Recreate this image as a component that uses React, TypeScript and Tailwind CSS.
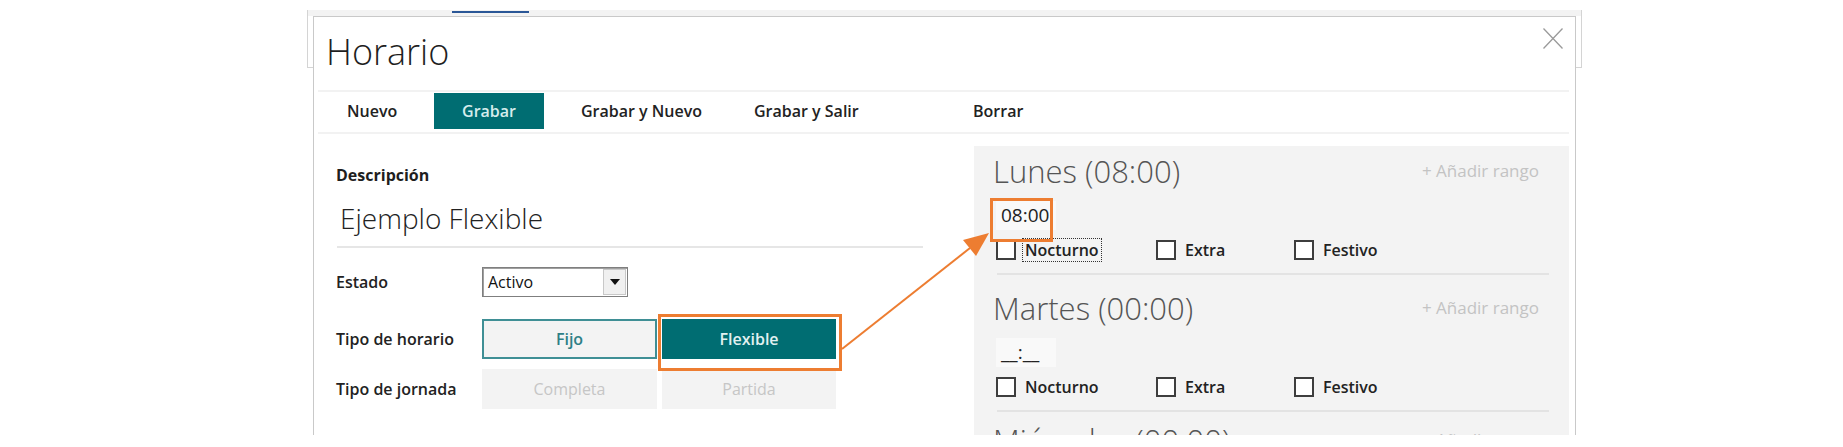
import React from "react";

const checks = ["Nocturno", "Extra", "Festivo"];

function Checkbox({ label, focused, width }: { label: string; focused?: boolean; width: string }) {
  return (
    <div className={`flex items-center ${width}`}>
      <span className="h-[20px] w-[20px] shrink-0 border-2 border-[#3e3e3e] bg-white" />
      <span
        className={`ml-[6px] border px-[2px] text-[16px] font-semibold leading-[22px] text-[#222] ${
          focused ? "border-dotted border-[#333]" : "border-transparent"
        }`}
      >
        {label}
      </span>
    </div>
  );
}

function Day({
  name,
  hours,
  value,
  focused,
  last,
}: {
  name: string;
  hours: string;
  value: string;
  focused?: boolean;
  last?: boolean;
}) {
  return (
    <div className={`pb-[13px] ${last ? "-mt-[5px]" : ""}`}>
      <div className="flex items-start justify-between">
        <div className="-ml-[3px] text-[31px] font-light leading-[40px] text-[#555]">
          {name} ({hours})
        </div>
        <div className="mt-[8px] pr-[10px] text-[17px] leading-[24px] text-[#c3c3c3]">+ Añadir rango</div>
      </div>
      <div className="mt-[10px] h-[29px] w-[60px] bg-[#f9f9f9] pl-[5px] text-[19px] leading-[29px] text-[#222]">
        {value}
      </div>
      <div className="mt-[10px] flex h-[20px] items-center">
        <Checkbox label={checks[0]} focused={focused} width="w-[160px]" />
        <Checkbox label={checks[1]} width="w-[138px]" />
        <Checkbox label={checks[2]} width="w-[138px]" />
      </div>
      <div className="ml-[1px] mt-[13px] h-[2px] bg-[#e3e3e3]" />
    </div>
  );
}

function Field({ label, children }: { label: string; children: React.ReactNode }) {
  return (
    <div className="flex items-center">
      <div className="w-[146px] text-[16px] font-semibold text-[#222]">{label}</div>
      {children}
    </div>
  );
}

export default function App() {
  return (
    <div className="relative h-[447px] w-[1843px] overflow-hidden bg-white font-['Open_Sans',sans-serif]">
      {/* ventana de fondo */}
      <div className="pl-[307px] pt-[10px]">
        <div className="h-[58px] w-[1275px] border-x border-b border-[#d4d4d4] bg-white">
          <div className="h-[6px] bg-[#f3f3f3] pt-[1px]">
            <div className="ml-[144px] h-[2px] w-[77px] bg-[#2b5797]" />
          </div>
        </div>
      </div>

      {/* modal */}
      <div className="absolute left-[313px] top-[16px] h-[419px] w-[1263px] overflow-hidden border border-b-0 border-[#c9c9c9] bg-white">
        <div className="flex h-[73px] items-start justify-between">
          <h1 className="ml-[12px] mt-[15px] text-[36px] font-light leading-[40px] text-[#1e1e1e]">Horario</h1>
          <svg className="mr-[12px] mt-[11px]" width="20" height="21" viewBox="0 0 20 21">
            <path d="M0.5 0.5L19.5 20.5M19.5 0.5L0.5 20.5" stroke="#9a9a9a" strokeWidth="1.3" fill="none" />
          </svg>
        </div>

        {/* barra de acciones */}
        <div className="ml-[4px] mr-[6px] flex h-[44px] items-start border-y-2 border-[#f2f2f2] pt-[1px] text-[16px] font-semibold text-[#222]">
          <div className="w-[116px] pl-[29px] leading-[36px]">Nuevo</div>
          <div className="h-[36px] w-[110px] bg-[#006d72] text-center leading-[36px] text-[#d6ecec]">Grabar</div>
          <div className="w-[173px] pl-[37px] leading-[36px]">Grabar y Nuevo</div>
          <div className="w-[219px] pl-[37px] leading-[36px]">Grabar y Salir</div>
          <div className="pl-[37px] leading-[36px]">Borrar</div>
        </div>

        <div className="mt-[12px] flex">
          {/* formulario */}
          <div className="w-[609px] pl-[22px] pt-[18px]">
            <div className="text-[16px] font-bold leading-[22px] text-[#1e1e1e]">Descripción</div>
            <div className="mt-[14px] pl-[4px] text-[28px] font-light leading-[36px] text-[#222]">Ejemplo Flexible</div>
            <div className="ml-[1px] mt-[10px] h-[2px] bg-[#e6e6e6]" />

            <div className="mt-[19px]">
              <Field label="Estado">
                <div className="flex h-[30px] w-[146px] border border-[#7f7f7f] bg-white shadow-[inset_1px_1px_0_#a0a0a0]">
                  <div className="flex-1 pl-[5px] text-[16px] font-medium leading-[28px] text-[#111]">Activo</div>
                  <div className="m-[1px] flex w-[23px] items-center justify-center border border-[#c8c8c8] bg-[#f0f0f0]">
                    <svg width="10" height="6" viewBox="0 0 10 6">
                      <path d="M0 0H10L5 6Z" fill="#111" />
                    </svg>
                  </div>
                </div>
              </Field>
            </div>

            <div className="mt-[22px]">
              <Field label="Tipo de horario">
                <div className="flex gap-[5px]">
                  <div className="h-[40px] w-[175px] border-2 border-[#3f8f95] bg-[#f3f3f3] text-center text-[16px] font-semibold leading-[36px] text-[#2e7f86]">
                    Fijo
                  </div>
                  <div className="h-[40px] w-[174px] bg-[#006d72] text-center text-[16px] font-semibold leading-[40px] text-[#e2f1f1]">
                    Flexible
                  </div>
                </div>
              </Field>
            </div>

            <div className="mt-[10px]">
              <Field label="Tipo de jornada">
                <div className="flex gap-[5px]">
                  <div className="h-[40px] w-[175px] bg-[#f3f3f3] text-center text-[16px] leading-[40px] text-[#c6c6c6]">
                    Completa
                  </div>
                  <div className="h-[40px] w-[174px] bg-[#f3f3f3] text-center text-[16px] leading-[40px] text-[#c6c6c6]">
                    Partida
                  </div>
                </div>
              </Field>
            </div>
          </div>

          {/* días */}
          <div className="ml-[51px] h-[320px] w-[595px] bg-[#f3f3f3] pl-[22px] pr-[20px] pt-[5px]">
            <Day name="Lunes" hours="08:00" value="08:00" focused />
            <Day name="Martes" hours="00:00" value="__:__" />
            <Day name="Miércoles" hours="00:00" value="__:__" last />
          </div>
        </div>
      </div>

      {/* anotaciones */}
      <svg className="pointer-events-none absolute left-0 top-0" width="1843" height="447" viewBox="0 0 1843 447">
        <rect x="659.5" y="315.5" width="181" height="54" fill="none" stroke="#ed7d31" strokeWidth="3" />
        <rect x="991.5" y="199.5" width="60" height="41" fill="none" stroke="#ed7d31" strokeWidth="3" />
        <path d="M842 349L970 248" stroke="#ed7d31" strokeWidth="2" fill="none" />
        <path d="M989 233L963 240L976 256Z" fill="#ed7d31" />
      </svg>
    </div>
  );
}
